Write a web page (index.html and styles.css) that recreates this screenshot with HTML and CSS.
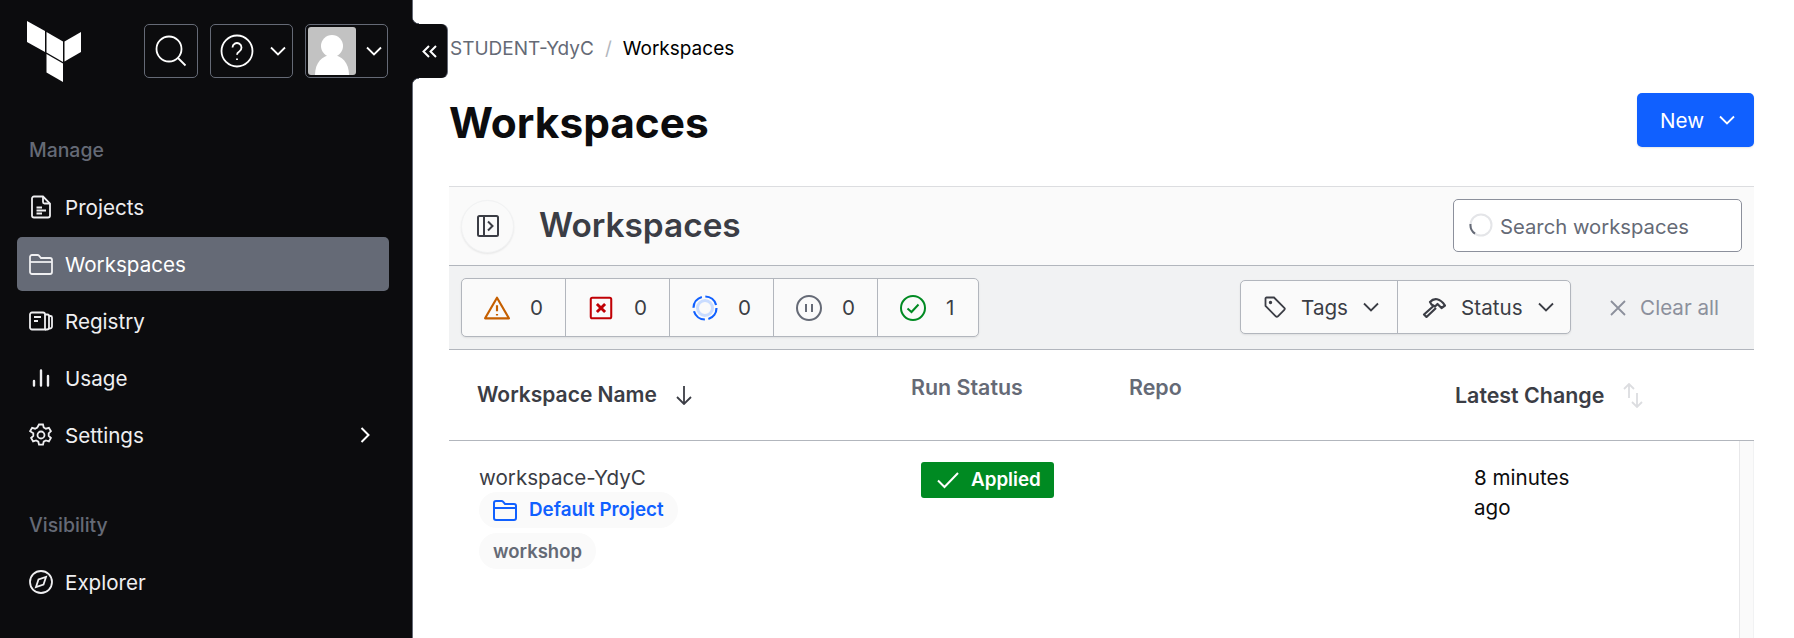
FILE: index.html
```html
<!DOCTYPE html>
<html>
<head>
    <title>Workspaces</title>
    <link rel="stylesheet" href="styles.css">
</head>
<body>
    <div class="layout">
        <aside class="sidebar">
            <div class="top-bar">
                <svg class="logo" viewBox="0 0 54 61" fill="#fff"><path d="M0 0 18 10V31L0 21Z"/><path d="M19.500 11 36 20.500V41L19.500 31.500Z"/><path d="M37.500 20.500 54 11V31L37.500 40.500Z"/><path d="M19.500 33 36 42.500V61L19.500 51.500Z"/></svg>
                <button class="top-btn search-btn">
                    <svg width="32" height="32" viewBox="0 0 32 32" fill="none" stroke="#fff" stroke-width="1.800"><circle cx="14" cy="14" r="12.500"/><path d="M23 23 30.500 30.500"/></svg>
                </button>
                <button class="top-btn menu-btn">
                    <svg width="34" height="34" viewBox="0 0 34 34" fill="none" stroke="#fff" stroke-width="1.800"><circle cx="17" cy="17" r="15.500"/><path d="M12.500 13.500a4.500 4.500 0 1 1 6.800 3.900c-1.500.9-2.300 1.800-2.300 3.300"/><path d="M17 24.500v1.500"/></svg>
                    <svg class="chev" width="16" height="16" viewBox="0 0 16 16" fill="none" stroke="#fff" stroke-width="1.800"><path d="M1 4.500 8 11.500 15 4.500"/></svg>
                </button>
                <button class="top-btn avatar-btn">
                    <span class="avatar"><svg width="48" height="48" viewBox="0 0 48 48" fill="#fff"><circle cx="24" cy="19" r="11"/><path d="M7 48C7 36 14 28 24 28S41 36 41 48Z"/></svg></span>
                    <svg class="chev" width="16" height="16" viewBox="0 0 16 16" fill="none" stroke="#fff" stroke-width="1.800"><path d="M1 4.500 8 11.500 15 4.500"/></svg>
                </button>
            </div>

            <div class="nav-title">Manage</div>
            <nav class="nav">
                <a class="nav-item">
                    <svg class="nav-icon" viewBox="0 0 24 24"><path d="M14 1.500H5a2 2 0 0 0-2 2v17a2 2 0 0 0 2 2h14a2 2 0 0 0 2-2V8.500Z"/><path d="M14 1.500V7a1.500 1.500 0 0 0 1.500 1.500H21"/><path d="M7.500 12.500H13M7.500 15.500H17M7.500 18.500H13"/></svg>
                    Projects
                </a>
                <a class="nav-item active">
                    <svg class="nav-icon" viewBox="0 0 24 24"><path d="M1 10V5a2 2 0 0 1 2-2h5.500a2 2 0 0 1 1.500.700L12 6h9a2 2 0 0 1 2 2v12a2 2 0 0 1-2 2H3a2 2 0 0 1-2-2Z"/><path d="M1 10H23"/></svg>
                    Workspaces
                </a>
                <a class="nav-item">
                    <svg class="nav-icon" viewBox="0 0 24 24"><path d="M16 20.500H3a2 2 0 0 1-2-2v-13a2 2 0 0 1 2-2h11a2 2 0 0 1 2 2Z"/><path d="M16 5.500h2.500a1.500 1.500 0 0 1 1.500 1.500v11.500a2 2 0 0 1-2 2h-2"/><path d="M20 7h1.500A1.500 1.500 0 0 1 23 8.500v9a2 2 0 0 1-3 1.700"/><path d="M5 8H12M5 12H9"/></svg>
                    Registry
                </a>
                <a class="nav-item">
                    <svg class="nav-icon" viewBox="0 0 24 24"><path stroke-width="2.400" stroke-linecap="round" d="M5 15V19.500M12 4.500V19.500M19 10V19.500"/></svg>
                    Usage
                </a>
                <a class="nav-item">
                    <svg class="nav-icon" viewBox="0 0 24 24"><circle cx="12" cy="12" r="3.500"/><path d="M10 1.500h4l.700 3 2.200 1.200 3-.900 2 3.400-2.200 2.100v2.600l2.200 2.100-2 3.400-3-.900-2.200 1.200-.700 3h-4l-.700-3-2.200-1.200-3 .900-2-3.400 2.200-2.100v-2.600L1.100 8.200l2-3.400 3 .900 2.200-1.200Z"/></svg>
                    Settings
                    <svg class="nav-arrow" width="10" height="16" viewBox="0 0 10 16" fill="none" stroke="#fff" stroke-width="2"><path d="M1.500 1 8.500 8 1.500 15"/></svg>
                </a>
            </nav>

            <div class="nav-title second">Visibility</div>
            <nav class="nav">
                <a class="nav-item">
                    <svg class="nav-icon" viewBox="0 0 24 24"><circle cx="12" cy="12" r="11"/><path d="M17 7 14.500 14.500 7 17 9.500 9.500Z"/></svg>
                    Explorer
                </a>
            </nav>
            <button class="collapse-tab">
                <svg width="15" height="13" viewBox="0 0 15 13" fill="none" stroke="#fff" stroke-width="2"><path d="M7 1 1.500 6.500 7 12M14 1 8.500 6.500 14 12"/></svg>
            </button>
        </aside>

        <main class="content">
            <div class="breadcrumb"><span class="crumb-org">STUDENT-YdyC</span><span class="crumb-sep">/</span><span>Workspaces</span></div>
            <div class="page-head">
                <h1>Workspaces</h1>
                <button class="new-btn">New
                    <svg width="16" height="16" viewBox="0 0 16 16" fill="none" stroke="#fff" stroke-width="1.800"><path d="M1 4.500 8 11.500 15 4.500"/></svg>
                </button>
            </div>

            <section class="panel">
                <div class="panel-head">
                    <button class="round-btn">
                        <svg width="22" height="22" viewBox="0 0 22 22" fill="none" stroke="#3b3d45" stroke-width="2"><rect x="1" y="1" width="20" height="20" rx="1.500"/><path d="M7 1V21M11 6.500 15.500 11 11 15.500"/></svg>
                    </button>
                    <h2>Workspaces</h2>
                    <div class="search">
                        <svg width="24" height="24" viewBox="0 0 24 24" fill="none" stroke-width="2"><circle cx="12" cy="12" r="10.500" stroke="#e4e5e8"/><path d="M6 20.600A10.500 10.500 0 0 1 1.500 11" stroke="#656a76"/></svg>
                        <span class="search-text">Search workspaces</span>
                    </div>
                </div>

                <div class="toolbar">
                    <div class="btn-group counts">
                        <div class="count-cell">
                            <svg width="26" height="26" viewBox="0 0 24 24" fill="none" stroke="#c55f00" stroke-width="2"><path d="M12 2.500 23 21.500H1Z" stroke-linejoin="round"/><path d="M12 9.500V15M12 17.500V19"/></svg>
                            <span>0</span>
                        </div>
                        <div class="count-cell">
                            <svg width="26" height="26" viewBox="-1.700 -1.700 25.400 25.400" fill="none" stroke="#c00005" stroke-width="2"><rect x="1" y="1" width="20" height="20" rx="1.500"/><path stroke-width="2.800" d="M7 7 15 15M15 7 7 15"/></svg>
                            <span>0</span>
                        </div>
                        <div class="count-cell">
                            <svg width="26" height="26" viewBox="0 0 26 26" fill="none" stroke-width="2"><circle cx="13" cy="13" r="7.500" stroke="#c9dcff" stroke-width="3"/><circle cx="13" cy="13" r="11.500" stroke="#1060ff" stroke-width="2.200" stroke-dasharray="14.500 3.560"/></svg>
                            <span>0</span>
                        </div>
                        <div class="count-cell">
                            <svg width="26" height="26" viewBox="0 0 26 26" fill="none" stroke="#656a76" stroke-width="2"><circle cx="13" cy="13" r="12"/><path d="M10 9V17M16 9V17"/></svg>
                            <span>0</span>
                        </div>
                        <div class="count-cell">
                            <svg width="26" height="26" viewBox="0 0 26 26" fill="none" stroke="#008a22" stroke-width="2"><circle cx="13" cy="13" r="12"/><path d="M7.500 13.500 11.500 17 18.500 9.500"/></svg>
                            <span>1</span>
                        </div>
                    </div>

                    <div class="btn-group filters">
                        <button class="filter-btn tags">
                            <svg width="22" height="22" viewBox="0 0 22 22" fill="none" stroke="#3b3d45" stroke-width="1.800"><path d="M1.500 2.500a1 1 0 0 1 1-1H10l10.300 10.300a1.500 1.500 0 0 1 0 2.100l-6.400 6.400a1.500 1.500 0 0 1-2.100 0L1.500 10Z"/><circle cx="6.500" cy="6.500" r=".800"/></svg>
                            <span class="filter-label">Tags</span>
                            <svg width="16" height="16" viewBox="0 0 16 16" fill="none" stroke="#3b3d45" stroke-width="1.800"><path d="M1 4.500 8 11.500 15 4.500"/></svg>
                        </button>
                        <button class="filter-btn status">
                            <svg width="24" height="22" viewBox="0 0 24 22" fill="none" stroke="#3b3d45" stroke-width="2.200" stroke-linejoin="round"><path d="M8 6C12 1.500 18 2 23 9.500L19.500 12 15.500 8 13 10.500 9.500 8.500Z"/><path d="M11.500 10 2 18.500 4.500 21 14 12"/></svg>
                            <span class="filter-label">Status</span>
                            <svg width="16" height="16" viewBox="0 0 16 16" fill="none" stroke="#3b3d45" stroke-width="1.800"><path d="M1 4.500 8 11.500 15 4.500"/></svg>
                        </button>
                    </div>
                    <div class="clear-all">
                        <svg width="16" height="16" viewBox="0 0 16 16" fill="none" stroke="#8c909c" stroke-width="1.800"><path d="M1 1 15 15M15 1 1 15"/></svg>
                        Clear all
                    </div>
                </div>

                <div class="table-head">
                    <div class="th th-name">Workspace Name
                        <svg width="16" height="20" viewBox="0 0 16 20" fill="none" stroke="#3b3d45" stroke-width="1.800"><path d="M8 1V19M1 12 8 19 15 12"/></svg>
                    </div>
                    <div class="th th-muted">Run Status</div>
                    <div class="th th-muted">Repo</div>
                    <div class="th th-latest">Latest Change
                        <svg width="20" height="25" viewBox="0 0 20 25" fill="none" stroke="#dcdde0" stroke-width="1.800"><path d="M6 15V1M1 6 6 1 11 6M14 10V24M9 19 14 24 19 19"/></svg>
                    </div>
                </div>

                <div class="table-row">
                    <div class="td td-name">
                        <div class="ws-name">workspace-YdyC</div>
                        <div class="pill project">
                            <svg width="24" height="24" viewBox="0 0 24 24" fill="none" stroke="#1060ff" stroke-width="2"><path d="M1 10V5a2 2 0 0 1 2-2h5.500a2 2 0 0 1 1.500.700L12 6h9a2 2 0 0 1 2 2v12a2 2 0 0 1-2 2H3a2 2 0 0 1-2-2Z"/><path d="M1 10H23"/></svg>
                            Default Project
                        </div>
                        <div class="pill tag">workshop</div>
                    </div>
                    <div class="td td-status">
                        <span class="badge">
                            <svg width="22" height="18" viewBox="0 0 22 18" fill="none" stroke="#fff" stroke-width="2"><path d="M1 9.500 7.500 16 21 2"/></svg>
                            Applied
                        </span>
                    </div>
                    <div class="td"></div>
                    <div class="td td-latest">8 minutes ago</div>
                    <div class="scroll-track"></div>
                </div>
            </section>
        </main>
    </div>
</body>
</html>
```

FILE: styles.css
```css
* {
    box-sizing: border-box;
}

html, body {
    height: 100%;
}

body {
    margin: 0;
    overflow: hidden;
    background-color: #fff;
    font-family: Inter, "Liberation Sans", sans-serif;
    color: #3b3d45;
}

button {
    font-family: inherit;
    cursor: pointer;
}

.layout {
    display: flex;
    height: 638px;
}

/* sidebar */
.sidebar {
    position: relative;
    flex: 0 0 413px;
    padding: 21px 23px 0 17px;
    background-color: #0c0c0e;
    border-right: 1px solid #656a76;
}

.top-bar {
    display: flex;
    align-items: flex-start;
    height: 61px;
    margin-bottom: 56px;
}

.logo {
    flex: none;
    width: 54px;
    height: 61px;
    margin-left: 10px;
    margin-right: 63px;
}

.top-btn {
    display: flex;
    align-items: center;
    margin-top: 3px;
    height: 54px;
    padding: 0;
    background: none;
    border: 1px solid #656a76;
    border-radius: 5px;
}

.search-btn {
    justify-content: center;
    width: 54px;
    margin-right: 12px;
}

.menu-btn {
    width: 83px;
    padding-left: 9px;
    margin-right: 12px;
    justify-content: space-between;
    padding-right: 6px;
}

.avatar-btn {
    width: 83px;
    padding-left: 2px;
    padding-right: 5px;
    justify-content: space-between;
}

.avatar {
    display: block;
    overflow: hidden;
    width: 48px;
    height: 48px;
    background-color: #c2c2c2;
    border-radius: 3px;
}

.avatar svg {
    display: block;
}

.collapse-tab {
    position: absolute;
    top: 24px;
    right: -35px;
    display: flex;
    align-items: center;
    justify-content: center;
    width: 35px;
    height: 54px;
    padding: 0;
    background-color: #0c0c0e;
    border: none;
    border-radius: 0 6px 6px 0;
    box-shadow: 1px 0 0 #656a76;
}

/* the small curves where the tab meets the sidebar edge */
.collapse-tab::before,
.collapse-tab::after {
    content: '';
    position: absolute;
    left: 0;
    width: 7px;
    height: 7px;
}

.collapse-tab::before {
    top: -7px;
    background: radial-gradient(circle at 100% 0, #fff 6px, #656a76 6.500px, #0c0c0e 7.500px);
}

.collapse-tab::after {
    bottom: -7px;
    background: radial-gradient(circle at 100% 100%, #fff 6px, #656a76 6.500px, #0c0c0e 7.500px);
}

.nav-title {
    margin-bottom: 18px;
    padding-left: 12px;
    font-size: 19.400px;
    line-height: 24px;
    font-weight: 500;
    color: #656a76;
}

.nav-title.second {
    margin-top: 51px;
}

.nav {
    display: flex;
    flex-direction: column;
    gap: 3px;
}

.nav-item {
    display: flex;
    align-items: center;
    height: 54px;
    padding: 0 12px;
    font-size: 20.600px;
    color: #efeff1;
    border-radius: 5px;
}

.nav-item.active {
    background-color: #656a76;
    color: #fff;
}

.nav-icon {
    flex: none;
    width: 24px;
    height: 24px;
    margin-right: 12px;
    fill: none;
    stroke: #efeff1;
    stroke-width: 1.800;
}

.nav-arrow {
    margin-left: auto;
    margin-right: 7px;
}

/* main area */
.content {
    flex: 1;
    min-width: 0;
    padding: 0 40px 0 36px;
}

.breadcrumb {
    display: flex;
    align-items: center;
    height: 24px;
    margin-top: 36px;
    padding-left: 1px;
    font-size: 19px;
    color: #000;
}

.crumb-org {
    color: #656a76;
}

.crumb-sep {
    margin: 0 11px;
    color: #b2b6bd;
}

.page-head {
    display: flex;
    align-items: center;
    justify-content: space-between;
    height: 54px;
    margin-top: 33px;
    margin-bottom: 39px;
}

.page-head h1 {
    margin: 4px 0 0;
    font-size: 42.400px;
    font-weight: 700;
    color: #0c0c0e;
}

.new-btn {
    display: flex;
    align-items: center;
    gap: 15px;
    width: 117px;
    height: 54px;
    padding: 0 0 0 23px;
    font-size: 20.600px;
    color: #fff;
    background-color: #1060ff;
    border: none;
    border-radius: 5px;
    box-shadow: 0 1px 2px rgba(0,0,0,0.1);
}

.panel {
    border-top: 1px solid #dcdde0;
}

.panel-head {
    display: flex;
    align-items: center;
    height: 79px;
    padding: 0 12px;
    background-color: #fafafa;
    border-bottom: 1px solid #b2b6bd;
}

.round-btn {
    display: flex;
    align-items: center;
    justify-content: center;
    flex: none;
    width: 53px;
    height: 53px;
    padding: 0;
    background-color: #fafafa;
    border: 1px solid #f1f2f3;
    border-radius: 50%;
    box-shadow: 0 1px 2px rgba(0,0,0,0.08);
}

.panel-head h2 {
    margin: 0 0 2px 25px;
    font-size: 33.400px;
    font-weight: 600;
    color: #3b3d45;
}

.search {
    display: flex;
    align-items: center;
    gap: 7px;
    width: 289px;
    height: 53px;
    margin-left: auto;
    margin-bottom: 2px;
    padding-left: 15px;
    font-size: 20.250px;
    color: #656a76;
    background-color: #fff;
    border: 1px solid #8c909c;
    border-radius: 5px;
}

.search-text {
    padding-top: 2px;
}

.toolbar {
    display: flex;
    align-items: center;
    height: 84px;
    padding: 0 12px;
    background-color: #f1f2f3;
    border-bottom: 1px solid #b2b6bd;
}

.btn-group {
    display: flex;
    background-color: #fafafa;
    border: 1px solid #b2b6bd;
    border-radius: 5px;
    box-shadow: 0 1px 2px rgba(0,0,0,0.08);
}

.counts {
    height: 59px;
}

.count-cell {
    display: flex;
    align-items: center;
    gap: 20px;
    width: 104px;
    padding-left: 22px;
    font-size: 20.600px;
    border-right: 1px solid #b2b6bd;
}

.count-cell:last-child {
    width: 100px;
    border-right: none;
}

.filters {
    height: 54px;
    margin-left: auto;
    margin-bottom: 2px;
}

.filter-btn {
    display: flex;
    align-items: center;
    height: 100%;
    padding: 0;
    font-size: 20.600px;
    color: #3b3d45;
    background: none;
    border: none;
}

.filter-label {
    padding-top: 2px;
}

.tags {
    width: 157px;
    padding-left: 23px;
    gap: 15px;
    border-right: 1px solid #b2b6bd;
}

.status {
    width: 172px;
    padding-left: 24px;
    gap: 15px;
}

.clear-all {
    display: flex;
    align-items: center;
    gap: 14px;
    margin-left: 39px;
    margin-right: 23px;
    font-size: 20.600px;
    color: #8c909c;
}

.table-head,
.table-row {
    display: grid;
    grid-template-columns: 450px 218px 326px 1fr;
}

.table-row {
    grid-template-columns: 450px 218px 326px 1fr 15px;
}

.table-head {
    height: 91px;
    border-bottom: 1px solid #b2b6bd;
}

.th {
    display: flex;
    align-items: flex-start;
    padding: 25px 12px 0;
    font-size: 21.400px;
    line-height: 24px;
    font-weight: 600;
    color: #3b3d45;
}

.th-muted {
    color: #656a76;
}

.th-name,
.th-latest {
    align-items: center;
    gap: 19px;
    padding-top: 0;
}

.th-name {
    padding-left: 28px;
    font-size: 21px;
}

.table-row {
    height: 198px;
}

.td {
    font-size: 20.600px;
    line-height: 30px;
}

.td-name {
    display: flex;
    flex-direction: column;
    align-items: flex-start;
    padding: 23px 0 0 30px;
}

.ws-name {
    line-height: 28px;
}

.pill {
    display: flex;
    align-items: center;
    height: 36px;
    padding: 0 14px;
    font-size: 18.800px;
    font-weight: 600;
    background-color: #fafafa;
    border-radius: 18px;
}

.project {
    gap: 12px;
    color: #1060ff;
}

.tag {
    margin-top: 5px;
    font-size: 18.500px;
    color: #656a76;
}

.td-status {
    padding: 21px 0 0 22px;
}

.badge {
    display: flex;
    align-items: center;
    gap: 12px;
    width: 133px;
    height: 36px;
    padding-left: 16px;
    font-size: 18.800px;
    font-weight: 600;
    color: #fff;
    background-color: #008a22;
    border-radius: 3px;
}

.td-latest {
    padding: 22px 160px 0 31px;
    color: #0c0c0e;
}

.scroll-track {
    background-color: #fafafa;
    border-left: 1px solid #e8e8ea;
    border-right: 1px solid #f1f2f3;
}
```
